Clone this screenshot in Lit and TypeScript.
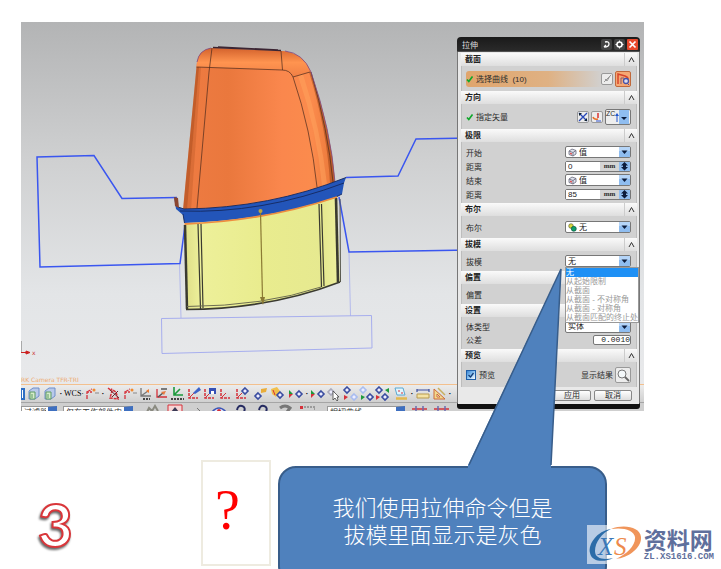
import { LitElement, html, css, svg, nothing, TemplateResult } from "lit";
import { customElement, property } from "lit/decorators.js";
import { classMap } from "lit/directives/class-map.js";

const FONT = css`"Liberation Sans", "Noto Sans CJK SC", sans-serif`;

/* ---------- 3D viewport ---------- */
@customElement("model-view")
class ModelView extends LitElement {
  static styles = css`
    :host { display: block; background: linear-gradient(#b3b4b5, #cfd0d1 38%, #e3e5e7 75%, #e8e9eb); }
    svg { display: block; width: 100%; height: 362px; }
    .camera { font: 6px "DejaVu Sans", sans-serif; fill: #eda970; }
    .axis { font: 6px "DejaVu Sans", sans-serif; fill: #c33; }
  `;
  render() {
    return html`<svg viewBox="21 22 623 362" preserveAspectRatio="xMinYMin slice" role="img" aria-label="CAD model">
      <defs>
        <linearGradient id="body" x1="0" x2="1" y1="0" y2="0">
          <stop offset="0" stop-color="#ee7b42"></stop><stop offset=".3" stop-color="#ea783d"></stop>
          <stop offset=".65" stop-color="#fa874d"></stop><stop offset=".85" stop-color="#fb8b4d"></stop><stop offset="1" stop-color="#e87637"></stop>
        </linearGradient>
        <linearGradient id="cap" x1="0" x2="0" y1="0" y2="1">
          <stop offset="0" stop-color="#d3622c"></stop><stop offset=".5" stop-color="#ff9450"></stop><stop offset="1" stop-color="#f07f45"></stop>
        </linearGradient>
        <linearGradient id="skirt" x1="0" x2="1" y1="0" y2="0">
          <stop offset="0" stop-color="#dede88"></stop><stop offset=".1" stop-color="#edf09a"></stop>
          <stop offset=".5" stop-color="#e9ec8e"></stop><stop offset=".9" stop-color="#e6e990"></stop><stop offset="1" stop-color="#eef0a0"></stop>
        </linearGradient>
      </defs>
      <g fill="none" stroke="#b3b9ec" stroke-width="1">
        <path d="M179.500 263L181 318M349 252L350.500 316"></path>
        <path d="M161.500 318.500L371.500 315.500L372 348L162 353.500Z" stroke="#a7aeee"></path>
      </g>
      <g fill="none" stroke="#3a56f0" stroke-width="1.500">
        <path d="M177 197.500L122 198.500L94 155.500L37 157L40 267L180 263.500L185 225"></path>
        <path d="M346 177.500L398 176L416 139L470 138M339 197L349 252L470 250"></path>
      </g>
      <path d="M183 210L197 62Q199 50 211 48L281 51Q303 52 311 72Q331 130 335 182Q270 207 183 210Z" fill="url(#body)"></path>
      <path d="M183 210L196.500 67H199L187 210Z" fill="#8f3a10" opacity=".45"></path>
      <path d="M187 210L199 67H201L191 210Z" fill="#8f3a10" opacity=".2"></path>
      <path d="M309 72Q327 130 330 183L335 182Q331 130 311 72Z" fill="#8f3a10" opacity=".45"></path>
      <path d="M298 76Q317 130 322 186L327 184Q321 130 303 74Z" fill="#ffa45e" opacity=".5"></path>
      <path d="M196.500 67L197 62Q199 50 211 48L281 51Q303 52 311 72L293 77Q290 70 282 70Z" fill="url(#cap)"></path>
      <g fill="none" stroke="#4a2a1c" stroke-width=".7">
        <path d="M196.500 67L282 70Q290 70 293 77L310 72M212 48L209 72L197 208M281 51L282.500 70M293 77Q311 130 317 187M311 72Q328 130 333 182"></path>
        <path d="M213 47.500L281 50.500M218 47L278 50" stroke="#3b2533" stroke-width="1.400"></path>
      </g>
      <path d="M197 62Q199 50 211 48M285 51Q303 53 311 72Q331 130 335 182" fill="none" stroke="#7a4a86" stroke-width=".8"></path>
      <path d="M185 223Q265 221 337 197L340 282Q270 309 187 309Z" fill="url(#skirt)"></path>
      <g fill="none" stroke="#3a3a30">
        <path d="M185 225L187 309" stroke-width="2.500"></path>
        <path d="M198 224L200.500 309M201 224L203 308M319 204L321.500 287M321.500 204L324 286" stroke-width="1.200"></path>
        <path d="M336 198L338 282" stroke-width="2.600"></path>
        <path d="M340 199L340.500 282" stroke-width="1" stroke="#55554a"></path>
        <path d="M186 309.500Q270 309 340 282" stroke-width="1.600"></path>
        <path d="M187 306.500Q264 306 321 287" stroke-width="1" stroke="#6d6d52"></path>
      </g>
      <path d="M174 197L176 197L178 207L184 209Q270 208 346 177.500L344 183L342 194L336 197Q270 220 184.500 223L183 215L176 209Z" fill="#2355b9"></path>
      <path d="M178 207L184 209Q270 208 346 177.500M180 211Q262 214 344 183M183 214L184.500 223M342 194L336 197" fill="none" stroke="#14285e" stroke-width=".9"></path>
      <path d="M174 197L175 206L179 208L178 198Z" fill="#8b4630"></path>
      <path d="M184.500 224Q265 221 337 197" fill="none" stroke="#ee8d3f" stroke-width="1.800"></path>
      <path d="M260.500 212L262.500 298" stroke="#8b7a34" stroke-width="1.200"></path>
      <circle cx="260.500" cy="211" r="2" fill="#c0a83e"></circle>
      <path d="M260 297H265L263 305Z" fill="#8b7a34"></path>
      <path d="M21.500 341V352" stroke="#999" stroke-width=".8"></path>
      <path d="M21 352.500H26V351L30 352.500L26 354V352.500" stroke="#c22" fill="#c22" stroke-width="1"></path>
      <text class="axis" x="32" y="355">x</text>
      <text class="camera" x="21" y="382">RK Camera TFR-TRI</text>
    </svg>`;
  }
}

/* ---------- toolbars ---------- */
const red = "#d5303a", blue = "#3a4da0", pale = "#a9bdf0", green = "#1d9a3c";
const csys = svg`<path d="M3 3V12H12" fill="none" stroke="${red}" stroke-width="1.500" stroke-dasharray="3 1"/><path d="M3 12L8 7" stroke="${red}"/>`;
const diamond = (x: number, y: number, c: string) =>
  svg`<path d="M${x} ${y - 3}L${x + 3} ${y}L${x} ${y + 3}L${x - 3} ${y}Z" fill="#eef" stroke="${c}" stroke-width="1.600"/>`;
const play = (x: number, y: number) => svg`<path d="M${x} ${y - 4}V${y}H${x + 4}Z" fill="${green}"/><path d="M${x} ${y + 4}V${y}H${x + 4}Z" fill="${red}"/>`;

const ICONS: Record<string, TemplateResult | ReturnType<typeof svg>> = {
  cube: svg`<path d="M3 5L7 2H13V10L9 13H3Z" fill="#b9c9ea" stroke="#6f8fca"/><path d="M4 6H9V13H4Z" fill="#d5ecc9" stroke="#5f9a65"/><path d="M6 8V12" stroke="#5f9a65"/>`,
  axes: svg`<path d="M3 13V6H8M3 6L8 3" fill="none" stroke="${red}" stroke-width="1.300" stroke-dasharray="4 1"/><circle cx="10" cy="4" r="1.500" fill="#f08a30"/><path d="M11 7H15" stroke="#888"/>`,
  rotate: svg`<path d="M2 2L6 5L4 12L12 13L10 6L5 3" fill="none" stroke="${red}" stroke-width="1.500" stroke-dasharray="3 1"/><path d="M4 4L13 12M12 5L6 11" stroke="#6b2430"/>`,
  wcs: svg`<path d="M3 2V10H13M3 10L10 5" fill="none" stroke="#777" stroke-width="1.300"/><path d="M8 5L11 3V7Z" fill="#f07a30"/><path d="M5 13H12" stroke="#444" stroke-width="2" stroke-dasharray="2 1"/>`,
  orient: svg`<path d="M3 3V11H13" fill="none" stroke="${red}" stroke-width="1.300"/><path d="M4 11L9 7M7 3H13" stroke="#555" stroke-width="1.500"/><path d="M7 6L12 5L10 9Z" fill="#e77a40"/>`,
  absolute: svg`<path d="M4 1V9H13M4 9L10 3" fill="none" stroke="${green}" stroke-width="1.600"/><path d="M1 13H14" stroke="#444" stroke-width="2" stroke-dasharray="2 1"/>`,
  edit: svg`${csys}<path d="M7 7L13 1L15 4L9 8Z" fill="#3c62c8"/>`,
  save: svg`${csys}<path d="M7 2H14V8H7Z" fill="#3550b5"/><path d="M9 5H12V8H9Z" fill="#fff"/>`,
  plain: csys,
  csysD: svg`${csys}${diamond(11, 5, blue)}`,
  part: svg`${diamond(5, 10, blue)}<path d="M8 3L14 2L13 6L8 7Z" fill="#e9ad3a"/>`,
  paint: svg`<path d="M2 3L8 1L11 5L7 11L3 8Z" fill="#f1c04c"/><path d="M4 4L6 9" stroke="${red}"/>${diamond(11, 9, blue)}`,
  go: svg`${play(1, 8)}${diamond(11, 8, blue)}`,
  pick: svg`${diamond(5, 6, "#aab")}<path d="M7 5V14L9 12L11 15L12 14L11 11H13Z" fill="#fff" stroke="#444" stroke-width=".8"/>`,
  tree: svg`${diamond(5, 4, blue)}${diamond(12, 11, pale)}<path d="M2 9V14L6 11Z" fill="${red}"/>`,
  treeB: svg`${diamond(5, 4, pale)}${diamond(12, 11, blue)}<path d="M3 9V14L7 11Z" fill="${green}"/>`,
  treeC: svg`${diamond(5, 4, blue)}${diamond(11, 11, blue)}<path d="M2 9V14L6 11Z" fill="${red}"/><path d="M15 2V7L11 4Z" fill="${green}"/>`,
  layer: svg`<path d="M2 2H10L12 9H4Z" fill="#e2f4fc" stroke="#5aa8d0"/><path d="M5 5H7M8 7H10" stroke="${red}"/><path d="M3 12.500H14" stroke="#e3b84e" stroke-width="2.500"/>`,
  ruler: svg`<path d="M2 4H14M2 3V6M14 3V6" stroke="${blue}" stroke-width="1.200"/><path d="M2 8H14V12H2Z" fill="#f4e3a5" stroke="#b89b4e"/>`,
  angle: svg`<path d="M3 3L14 13H3Z" fill="#f2d98c" stroke="#cc6b3c"/><path d="M6 8L9 11H6Z" fill="#fff" stroke="#cc6b3c"/><path d="M7 2L14 9" stroke="#c8b060" stroke-width="1.500"/>`,
  square: svg`<path d="M0 3H3V13H0Z" fill="#fff" stroke="#2f6fc4" stroke-width="2"/>`,
  snow: svg`<path d="M2 9L4 5L7 8L10 3L13 8" fill="none" stroke="#8a8a80" stroke-width="2"/>`,
  person: svg`<path d="M1 2H15V15H1Z" fill="#f5d5d5" stroke="${red}"/><path d="M8 4L12 9H4Z" fill="#3a3a55"/>`,
  arrow: svg`<path d="M8 5L12 9" fill="none" stroke="#777"/>`,
  eye: svg`<path d="M1 9Q8 1 15 9" fill="#dfe8ff" stroke="#3d55b5" stroke-width="1.500"/><circle cx="8" cy="8" r="2" fill="${red}"/>`,
  hook: svg`<path d="M4 7Q5 2 9 3Q13 4 11 9" fill="none" stroke="#252a60" stroke-width="2"/>`,
  grey: svg`<path d="M3 5Q8 1 13 5L10 9" fill="none" stroke="#777" stroke-width="3"/>`,
  box: svg`<path d="M2 4H16V12" fill="none" stroke="#666" stroke-dasharray="2 1"/><path d="M1 3H4V6H1Z" fill="${red}"/>`,
  hash: svg`<path d="M1 6H16" stroke="${red}" stroke-width="1.500"/><path d="M5 3V12M12 3V12" stroke="#6b6bb0" stroke-width="1.500"/>`,
};
const glyph = (n: string) => html`<svg width="16" height="16" viewBox="0 0 16 16" aria-hidden="true">${ICONS[n]}</svg>`;

@customElement("tool-bars")
class ToolBars extends LitElement {
  static styles = css`
    :host { display: block; height: 27px; overflow: hidden; border-top: 1px solid #f3c08e; box-sizing: border-box; font-family: ${FONT}; }
    .row { display: flex; align-items: center; height: 18px; background: linear-gradient(#ececec, #d0d0d0); border-bottom: 1px solid #a5a5a5; box-sizing: border-box; }
    .second { background: #cfcfcf; gap: 6px; align-items: flex-start; }
    button { all: unset; display: block; width: 16px; height: 16px; flex: none; }
    svg { display: block; }
    .edge { width: 5px; overflow: hidden; }
    .dot { width: 6px; flex: none; text-align: center; font-size: 8px; font-weight: 700; }
    .gap { width: 3px; flex: none; }
    .second .gap { width: 0; }
    .wcs { width: 20px; font: 8px/16px "Liberation Serif", serif; white-space: nowrap; }
    select { appearance: none; box-sizing: border-box; flex: none; height: 14px; margin-top: 3px; padding: 0 2px; border: 1px solid #999; border-right: 9px solid #3e6fc0; background: #fff; color: #333; font: 8px ${FONT}; line-height: 12px; }
    .narrow { width: 36px; }
    .mid { width: 70px; }
    .wide { width: 78px; }
  `;
  private tools(list: string[]) {
    return list.map((n) => n === "." ? html`<span class="dot">·</span>`
      : n === "|" ? html`<span class="gap"></span>`
      : html`<button class=${classMap({ edge: n === "square" })} aria-label=${n}>${glyph(n)}</button>`);
  }
  render() {
    return html`
      <div class="row">
        ${this.tools(["square", "cube", "cube", "."])}<button class="wcs">WCS·</button>
        ${this.tools(["axes", ".", "rotate", "axes", "wcs", "orient", "absolute", "edit", "save", "plain", "csysD", "|", "part", "paint", "|", "go", ".", "go", "pick", "tree", "treeB", "treeC", "|", "layer", ".", "ruler", "angle", "."])}
      </div>
      <div class="row second">
        <select class="narrow" aria-label="过滤器"><option>过滤器</option></select>
        <select class="mid" aria-label="选择范围"><option>仅在工作部件内部</option></select>
        ${this.tools(["|", "snow", "person", "arrow", "eye", "hook", "hook", "grey", "box", "|"])}
        <select class="wide" aria-label="曲线规则"><option>相切曲线</option></select>
        ${this.tools(["hash", "hash"])}
      </div>`;
  }
}

/* ---------- extrude dialog ---------- */
@customElement("dialog-section")
class DialogSection extends LitElement {
  @property() heading = "";
  static styles = css`
    :host { display: block; font-family: ${FONT}; }
    .head { display: flex; align-items: center; justify-content: space-between; height: 13px; padding-left: 4px; background: linear-gradient(#fafafa, #dedede); }
    h3 { margin: 0; font-size: 8px; line-height: 13px; font-weight: 700; color: #222; }
    button { all: unset; width: 13px; height: 13px; border-left: 1px solid #ccc; box-sizing: border-box; }
    svg { display: block; }
    .body { padding: 0 5px 0 4px; background: #d1d1d1; border: solid #bdbdbd; border-width: 0 1px; }
  `;
  render() {
    return html`<div class="head"><h3>${this.heading}</h3>
      <button aria-label="折叠"><svg width="12" height="13" viewBox="0 0 12 13"><path d="M4 9L6.500 4.500L9 9" fill="none" stroke="#333"/></svg></button></div>
      <div class="body"><slot></slot></div>`;
  }
}

@customElement("extrude-dialog")
class ExtrudeDialog extends LitElement {
  static styles = css`
    :host { display: block; width: 183px; box-sizing: border-box; padding: 0 1px 5px; border-radius: 4px 4px 3px 3px; background: linear-gradient(#1a1a1a, #2a2a2a 14px, #777 15px, #777 366px, #111 367px); font-family: ${FONT}; font-size: 8px; color: #2b2b2b; }
    .title { display: flex; align-items: center; gap: 2px; height: 15px; padding: 0 1px 0 4px; color: #ddd; }
    .title h2 { margin: 0; flex: 1; font-size: 8px; font-weight: 400; }
    button { all: unset; box-sizing: border-box; }
    svg { display: block; flex: none; }
    .panel { padding: 1px 2px 0 3px; background: #e9e9e9; }
    .line { display: flex; align-items: center; }
    .grow { flex: 1; }
    .tall { height: 25px; }
    .pick { flex: 1; display: flex; align-items: center; gap: 3px; height: 16px; border-radius: 3px; background: linear-gradient(90deg, #e0a56c, #dfb183 55%, #d1d1d1 92%); }
    .plain { background: none; }
    .sq { display: grid; place-items: center; width: 12px; height: 12px; margin-right: 2px; border: 1px solid #999; border-radius: 2px; background: #ececec; }
    .hot, .lens { width: 16px; height: 16px; margin: 0; }
    .hot { border-color: #c0693c; background: #f6a874; }
    .vector { display: flex; width: 26px; height: 16px; border: 1px solid #777; border-radius: 2px; background: #eee; font-size: 7px; line-height: 8px; }
    .limits { padding: 3px 0 2px; }
    .limits .line { height: 14px; }
    .bool { height: 22px; }
    .single { height: 20px; }
    .settings { padding: 3px 0; }
    .settings .line { height: 13px; }
    .preview { height: 25px; gap: 2px; }
    .combo, .spin { position: relative; display: flex; align-items: center; width: 66px; height: 12px; box-sizing: border-box; border: 1px solid #777; border-radius: 2px; background: #fff; }
    .combo svg:first-child { margin-left: 2px; }
    .spin { height: 11px; background: #d4d4d4; }
    select, input[type="text"] { appearance: none; box-sizing: border-box; flex: 1; min-width: 0; height: 100%; margin: 0; padding: 0 2px; border: 0; background: transparent; color: #222; font: 8px ${FONT}; line-height: 9px; }
    .spin input { background: #fff; }
    .unit { width: 19px; text-align: center; font: 700 7px "Liberation Serif", serif; }
    .tolerance { width: 38px; height: 10px; border: 1px solid #777; border-radius: 2px; background: #fff; box-sizing: border-box; display: flex; }
    .tolerance input { font-family: "Liberation Mono", monospace; padding: 0; text-align: right; }
    .menu { position: absolute; z-index: 1; top: 11px; left: -1px; width: 74px; margin: 0; padding: 0; box-sizing: border-box; border: 1px solid #999; background: #fff; list-style: none; color: #999; line-height: 9px; white-space: nowrap; }
    .menu li { height: 9px; }
    .menu .on { background: #1e90f5; color: #fff; }
    input[type="checkbox"] { appearance: none; width: 10px; height: 10px; box-sizing: border-box; margin: 0; border: 1px solid #1f5fa8; background: linear-gradient(135deg, #3a86d6, #8cc4f2 50%, #fff); }
    .box { position: relative; display: grid; margin-right: 3px; }
    .box svg { position: absolute; inset: 0; }
    .check { display: flex; align-items: center; }
    .foot { display: flex; justify-content: flex-end; gap: 3px; height: 17px; padding: 3px 5px 0; box-sizing: border-box; }
    .foot button { width: 38px; height: 11px; border: 1px solid #888; border-radius: 2px; background: linear-gradient(#fff, #ddd); text-align: center; line-height: 9px; }
  `;
  private arrow() {
    return html`<svg width="11" height="10" viewBox="0 0 11 10"><path d="M0 0H11V10H0Z" fill="#8fbdf0"/><path d="M0 0H11V4H0Z" fill="#b5d5f8"/><path d="M2.500 3.500H8.500L5.500 7Z" fill="#0c1c3c"/></svg>`;
  }
  private combo(label: string, value: string, icon: unknown = nothing, menu: unknown = nothing) {
    return html`<div class="combo">${icon}<select aria-label=${label}><option>${value}</option></select>${this.arrow()}${menu}</div>`;
  }
  private spin(label: string, value: string) {
    return html`<div class="spin"><input type="text" aria-label=${label} .value=${value}><span class="unit">mm</span>
      <svg width="11" height="9" viewBox="0 0 11 9"><path d="M0 0H11V9H0Z" fill="#8fbdf0"/><path d="M5.500 0L9 3.500H7V5H9L5.500 8.500L2 5H4V3.500H2Z" fill="#0c1c3c"/></svg></div>`;
  }
  private tick() {
    return html`<svg width="7" height="8" viewBox="0 0 7 8"><path d="M1 4.500L2.800 6.500L6.500 1.500" fill="none" stroke="#0fa82a" stroke-width="1.700"/></svg>`;
  }
  render() {
    const cube = html`<svg width="9" height="9" viewBox="0 0 9 9"><path d="M1 3L4 1L8 2.500V6L5 8L1 6.500Z" fill="#dfe3ee" stroke="#667" stroke-width=".8"/><path d="M1 3L5 4.500V8M5 4.500L8 2.500" fill="none" stroke="#667" stroke-width=".8"/><path d="M2 4.500L4 5.200V6.800L2 6Z" fill="#d55"/></svg>`;
    const balls = html`<svg width="9" height="9" viewBox="0 0 9 9"><circle cx="3" cy="3" r="2.300" fill="#d8d83c" stroke="#553" stroke-width=".6"/><circle cx="5.800" cy="5.800" r="2.500" fill="#11a06a" stroke="#043" stroke-width=".6"/></svg>`;
    const options = ["无", "从起始限制", "从截面", "从截面 - 不对称角", "从截面 - 对称角", "从截面匹配的终止处"];
    const menu = html`<ul class="menu" role="listbox">${options.map((o, i) =>
      html`<li role="option" class=${classMap({ on: i === 0 })}>${o}</li>`)}</ul>`;
    return html`
      <div class="title"><h2>拉伸</h2>
        <button aria-label="重置"><svg width="11" height="11" viewBox="0 0 11 11"><rect width="11" height="11" rx="2" fill="#444"/><path d="M4 3Q8 2 8 5Q8 8 3 8M5 6L3 8" fill="none" stroke="#fff" stroke-width="1.300"/></svg></button>
        <button aria-label="选项"><svg width="11" height="11" viewBox="0 0 11 11"><rect width="11" height="11" rx="2" fill="#444"/><circle cx="5.500" cy="5.500" r="2.500" fill="none" stroke="#fff" stroke-width="1.500"/><path d="M5.500 1.500V3M5.500 8V9.500M1.500 5.500H3M8 5.500H9.500" stroke="#fff"/></svg></button>
        <button aria-label="关闭"><svg width="11" height="11" viewBox="0 0 11 11"><rect width="11" height="11" rx="1" fill="#e8482b"/><path d="M2.500 2.500L8.500 8.500M8.500 2.500L2.500 8.500" stroke="#fff" stroke-width="1.700"/></svg></button>
      </div>
      <div class="panel">
        <dialog-section heading="截面"><div class="line tall">
          <div class="pick">${this.tick()}<span class="grow">选择曲线&nbsp; (10)</span>
            <button class="sq" aria-label="确认"><svg width="9" height="9" viewBox="0 0 9 9"><path d="M2 5L4 7L7 2M1 8L8 1" fill="none" stroke="#999"/></svg></button></div>
          <button class="sq hot" aria-label="绘制截面"><svg width="14" height="14" viewBox="0 0 14 14"><path d="M2 12V2L9 4Q12 5 12 7" fill="none" stroke="#d6452c" stroke-width="1.500"/><path d="M5 6V12M5 6H8" stroke="#8a5d6f"/><circle cx="10" cy="9" r="2.500" fill="#dde" stroke="#4653a8" stroke-width="1.300"/><path d="M11 11L13 13" stroke="#4653a8"/></svg></button>
        </div></dialog-section>
        <dialog-section heading="方向"><div class="line tall">
          <div class="pick plain">${this.tick()}<span>指定矢量</span></div>
          <button class="sq" aria-label="反向"><svg width="10" height="10" viewBox="0 0 10 10"><path d="M1 1L9 9M9 1L1 9" stroke="#2646b8" stroke-width="1.300"/><path d="M1 1H4L1 4ZM9 9H6L9 6Z" fill="#123"/></svg></button>
          <button class="sq" aria-label="矢量构造器"><svg width="10" height="10" viewBox="0 0 10 10"><path d="M6 1V6" stroke="#d33" stroke-width="1.500"/><path d="M1 5Q2 8 6 7" fill="none" stroke="#e8702a" stroke-width="1.500"/><path d="M4 9H9" stroke="#35c"/></svg></button>
          <button class="vector">ZC<svg width="4" height="14" viewBox="0 0 4 14"><path d="M2 12V5" stroke="#25c"/><path d="M0 6L2 3L4 6Z" fill="#25c"/></svg><svg width="10" height="14" viewBox="0 0 10 14"><path d="M0 0H10V14H0Z" fill="#8fbdf0"/><path d="M2 7H8L5 10Z" fill="#0c1c3c"/></svg></button>
        </div></dialog-section>
        <dialog-section heading="极限"><div class="limits">
          <div class="line"><span class="grow">开始</span>${this.combo("开始", "值", cube)}</div>
          <div class="line"><span class="grow">距离</span>${this.spin("开始距离", "0")}</div>
          <div class="line"><span class="grow">结束</span>${this.combo("结束", "值", cube)}</div>
          <div class="line"><span class="grow">距离</span>${this.spin("结束距离", "85")}</div>
        </div></dialog-section>
        <dialog-section heading="布尔"><div class="line bool"><span class="grow">布尔</span>${this.combo("布尔", "无", balls)}</div></dialog-section>
        <dialog-section heading="拔模"><div class="line single"><span class="grow">拔模</span>${this.combo("拔模", "无", nothing, menu)}</div></dialog-section>
        <dialog-section heading="偏置"><div class="line single">偏置</div></dialog-section>
        <dialog-section heading="设置"><div class="settings">
          <div class="line"><span class="grow">体类型</span>${this.combo("体类型", "实体")}</div>
          <div class="line"><label class="grow" for="tol">公差</label><div class="tolerance"><input id="tol" type="text" .value=${"0.0010"}></div></div>
        </div></dialog-section>
        <dialog-section heading="预览"><div class="line preview">
          <label class="check grow"><span class="box"><input type="checkbox" checked><svg width="10" height="10" viewBox="0 0 10 10"><path d="M2.500 5L4.500 7L7.500 3" fill="none" stroke="#123c78" stroke-width="1.300"/></svg></span>预览</label><span>显示结果</span>
          <button class="sq lens" aria-label="显示结果"><svg width="14" height="14" viewBox="0 0 14 14"><circle cx="6" cy="6" r="4" fill="#f4f8fa" stroke="#777"/><path d="M9 9L13 13" stroke="#666" stroke-width="1.800"/></svg></button>
        </div></dialog-section>
        <div class="foot"><button>应用</button><button>取消</button></div>
      </div>`;
  }
}

/* ---------- slide ---------- */
@customElement("app-root")
class AppRoot extends LitElement {
  static styles = css`
    :host { display: block; position: relative; box-sizing: border-box; height: 100vh; padding-top: 22px; overflow: hidden; background: #fff; font-family: ${FONT}; }
    .shot { position: relative; margin: 0 77px 0 21px; }
    extrude-dialog { position: absolute; top: 15px; right: 4px; }
    .notes { display: grid; grid-template-columns: minmax(0, 1fr) 70px 329px; gap: 7px; align-items: start; margin: 49px 114px 0 0; }
    .step { margin: 27px 0 0 38px; font: 700 60px/74px Lato, sans-serif; color: #fff; -webkit-text-stroke: 2px #d9363a; filter: drop-shadow(-1px 2px 1px #666); }
    .query { box-sizing: border-box; height: 106px; padding-left: 12px; border: 2px solid #eeebe0; color: #f00; font: 56px/96px "Liberation Serif", serif; }
    .callout { position: relative; box-sizing: border-box; height: 118px; margin-top: 6px; padding-top: 25px; border: 2px solid #385d8a; border-radius: 18px; background: #4f81bd; color: #fff; text-align: center; font: 300 22px/27px "Noto Sans CJK SC", sans-serif; }
    .callout p { margin: 0; }
    .tail { position: absolute; right: 42px; bottom: 114px; display: block; }
    .mark { position: absolute; right: 7px; bottom: 5px; display: flex; align-items: center; height: 39px; color: #5f6f9c; }
    .logo { display: block; }
    .mark strong { display: block; font: 700 23px/25px "Noto Sans CJK SC", sans-serif; }
    .mark small { display: block; font: 700 9px/11px "Liberation Mono", monospace; }
  `;
  render() {
    return html`
      <div class="shot"><model-view></model-view><tool-bars></tool-bars><extrude-dialog></extrude-dialog></div>
      <div class="notes">
        <div class="step">3</div>
        <div class="query">?</div>
        <div class="callout">
          <svg class="tail" width="95" height="201" viewBox="0 0 95 201" aria-hidden="true"><path d="M0 198L93 2L83 198V201H0Z" fill="#4f81bd"/><path d="M1 198L93 2L83 198" fill="none" stroke="#385d8a" stroke-width="1.500"/></svg>
          <p>我们使用拉伸命令但是</p><p>拔模里面显示是灰色</p>
        </div>
      </div>
      <div class="mark">
        <svg class="logo" width="57" height="39" viewBox="0 0 57 39" aria-hidden="true">
          <path d="M0 0H20V39H0Z" fill="#fff" opacity=".6"/>
          <path d="M24 4C10 6 1 19 3 28C5 38 19 37 26 33C17 35 8 34 8 26C8 17 15 8 24 4Z" fill="#2c6ca8"/>
          <path d="M24 4C37 -1 53 2 54 12C55 23 41 33 29 34C40 29 49 20 48 12C47 5 36 2 24 4Z" fill="#f0955a"/>
          <text x="11" y="30" font-family="Liberation Serif, serif" font-style="italic" font-size="25" fill="#3a78b8">X</text>
          <text x="27" y="30" font-family="Liberation Serif, serif" font-style="italic" font-size="25" fill="#ee8a4c">S</text>
        </svg>
        <div><strong>资料网</strong><small>ZL.XS1616.COM</small></div>
      </div>`;
  }
}
